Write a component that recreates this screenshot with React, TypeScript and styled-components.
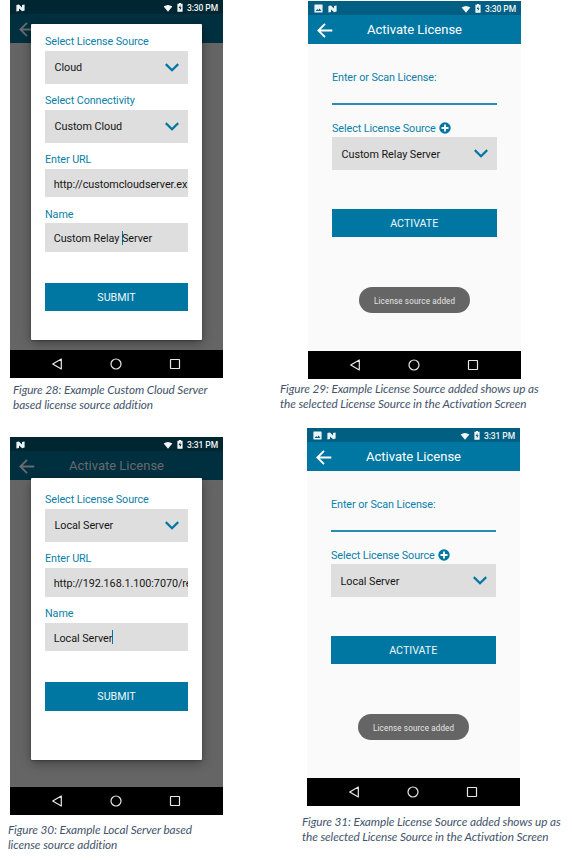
import React from "react";
import styled, { createGlobalStyle } from "styled-components";

const GlobalStyle = createGlobalStyle`
  * { box-sizing: border-box; }
  body { margin: 0; background: #fff; overflow: hidden; }
`;

const Page = styled.main`
  display: grid;
  grid-template-columns: 270px 302px;
  width: 572px;
  height: 860px;
  overflow: hidden;
  font-family: Roboto, sans-serif;
`;

const Column = styled.section<{ $top: number }>`
  display: flex;
  flex-direction: column;
  padding-top: ${(p) => p.$top}px;
`;

const Figure = styled.figure<{ $height: number; $indent: number }>`
  margin: 0;
  height: ${(p) => p.$height}px;
  flex: none;
  padding-left: ${(p) => p.$indent}px;
`;

const Caption = styled.figcaption<{ $shift: number; $gap: number }>`
  margin: ${(p) => p.$gap}px 0 0 ${(p) => p.$shift}px;
  font: italic 11.8px/15px Lato, sans-serif;
  color: #44546a;
`;

const CaptionLine = styled.span<{ $spacing: number }>`
  display: block;
  white-space: nowrap;
  letter-spacing: ${(p) => p.$spacing}px;
`;

const Phone = styled.div`
  position: relative;
  display: flex;
  flex-direction: column;
  width: 213px;
  height: 378px;
  background: #fafafa;
`;

const StatusBar = styled.header<{ $dim?: boolean }>`
  display: flex;
  align-items: center;
  justify-content: space-between;
  height: 14px;
  padding: 1px 5px 0 6px;
  background: ${(p) => (p.$dim ? "#002631" : "#005f82")};
`;

const StatusGroup = styled.div<{ $gap: number }>`
  display: flex;
  align-items: center;
  gap: ${(p) => p.$gap}px;
`;

const Clock = styled.span`
  font-size: 8.5px;
  font-weight: 500;
  line-height: 14px;
  color: #f1f5f6;
  white-space: nowrap;
  letter-spacing: -0.1px;
`;

const AppBar = styled.div<{ $dim?: boolean }>`
  display: grid;
  grid-template-columns: 24px 1fr 24px;
  align-items: center;
  height: 28.5px;
  padding: 1px 0 0 9px;
  background: ${(p) => (p.$dim ? "#003040" : "#0077a3")};
  color: ${(p) => (p.$dim ? "#666b6d" : "#fff")};
`;

const Title = styled.h1`
  margin: 0 0 0 -9px;
  text-align: center;
  font-size: 13px;
  font-weight: 400;
  line-height: 28px;
  letter-spacing: 0;
`;

const Screen = styled.div<{ $dim?: boolean }>`
  flex: 1;
  display: flex;
  flex-direction: column;
  padding: 25px 24.5px 0 24px;
  background: ${(p) => (p.$dim ? "#656565" : "#fafafa")};
`;

const NavBar = styled.nav`
  display: flex;
  align-items: center;
  justify-content: center;
  gap: 47px;
  height: 28.4px;
  padding-right: 1px;
  background: #000;
`;

const Label = styled.label`
  display: flex;
  align-items: center;
  gap: 3px;
  height: 18px;
  font-size: 10.8px;
  color: #0b7fa9;
  white-space: nowrap;
  letter-spacing: -0.09px;
`;

const LicenseInput = styled.div`
  height: 18px;
  margin-bottom: 14.5px;
  border-bottom: 2px solid #2a8cb1;
`;

const SelectBox = styled.div`
  display: flex;
  align-items: center;
  justify-content: space-between;
  height: 33px;
  padding: 1px 9px 0 9.5px;
  background: #dedede;
  color: #161616;
  font-size: 10.8px;
  letter-spacing: -0.04px;
  white-space: nowrap;
`;

const InputBox = styled.div`
  display: flex;
  align-items: center;
  height: 28.7px;
  padding: 2px 0 0 8.7px;
  overflow: hidden;
  background: #dedede;
  color: #161616;
  font-size: 10.8px;
  letter-spacing: -0.05px;
  white-space: pre;
`;

const Caret = styled.i`
  width: 1px;
  height: 14px;
  margin: -2px -1px 0 0;
  background: #0077a3;
`;

const Field = styled.div`
  margin-bottom: 8px;
`;

const Button = styled.button<{ $gap: number }>`
  display: block;
  width: 100%;
  height: 28.3px;
  margin-top: ${(p) => p.$gap}px;
  padding: 1px 0 0;
  border: 0;
  background: #0077a3;
  color: #eef7fa;
  font: 400 10.7px/28px Roboto, sans-serif;
`;

const Dialog = styled.div<{ $top: number; $height: number; $pad: number }>`
  position: absolute;
  left: 21.4px;
  top: ${(p) => p.$top}px;
  width: 170.4px;
  height: ${(p) => p.$height}px;
  padding: ${(p) => p.$pad}px 13.8px 0 13.6px;
  background: #fff;
  border-radius: 1px;
  box-shadow: 0 3px 12px rgba(0, 0, 0, 0.36), 0 1px 2px rgba(0, 0, 0, 0.25);
`;

const Toast = styled.div`
  position: absolute;
  left: 51px;
  top: 286px;
  width: 111px;
  height: 26px;
  border-radius: 13px;
  background: #656565;
  color: #e6e6e6;
  font-size: 9.6px;
  line-height: 27px;
  display: flex;
  justify-content: center;
`;

const ToastText = styled.span`
  white-space: nowrap;
  letter-spacing: 0.2px;
  transform: scaleX(0.835);
`;

const PictureIcon = () => (
  <svg width="9" height="9" viewBox="0 0 9 9">
    <path fill="#edf3f5" fillRule="evenodd" d="M1 .5h7q.6 0 .6.6v6.800q0 .6-.6.6H1q-.6 0-.6-.6V1.100Q.4.5 1 .5ZM1.700 7h5.700L5.600 4.500 4.200 6.200 3.200 5.100Z" />
  </svg>
);

const NougatIcon = () => (
  <svg width="9" height="8" viewBox="0 0 9 8">
    <path fill="#edf3f5" d="M.4 1 2.900.6 6 3.600V1l2.600-.4v6L6.200 7.300 3 4.400V7L.4 7.400Z" />
  </svg>
);

const WifiIcon = () => (
  <svg width="10" height="8" viewBox="0 0 11 9">
    <path fill="#f4f7f8" d="M.6 2.800Q5.400-.8 10.400 2.800L5.500 8.700Z" />
  </svg>
);

const BatteryIcon = () => (
  <svg width="6" height="9" viewBox="0 0 6 9">
    <path fill="#f4f7f8" fillRule="evenodd" d="M2 0h2v.8h1.600v8H.4v-8H2ZM3.500 2 1.600 5h1.200v2.200L4.500 4.200H3.300Z" />
  </svg>
);

const BackArrow = () => (
  <svg width="16" height="15" viewBox="0 0 16 15" fill="none" stroke="currentColor" strokeWidth="1.9">
    <path d="M15.300 7.500H1.600M8 .9 1.400 7.500 8 14.100" />
  </svg>
);

const Chevron = () => (
  <svg width="14" height="10" viewBox="0 0 14 10" fill="none" stroke="#0077a3" strokeWidth="2.200">
    <path d="m.8 1.100 6.200 6.200 6.200-6.200" />
  </svg>
);

const PlusIcon = () => (
  <svg width="12" height="12" viewBox="0 0 12 12">
    <circle cx="6" cy="6" r="5.700" fill="#0077a3" />
    <path d="M6 2.500v7M2.500 6h7" stroke="#fff" strokeWidth="1.800" />
  </svg>
);

const Navigation = () => (
  <NavBar>
    <svg width="12" height="12" viewBox="0 0 12 12" fill="none" stroke="#e8e8e8" strokeWidth="1.200">
      <path d="M10.300 1v10L1.700 6Z" strokeLinejoin="round" />
    </svg>
    <svg width="12" height="12" viewBox="0 0 12 12" fill="none" stroke="#e8e8e8" strokeWidth="1.200">
      <circle cx="6" cy="6" r="5" />
    </svg>
    <svg width="12" height="12" viewBox="0 0 12 12" fill="none" stroke="#e8e8e8" strokeWidth="1.200">
      <rect x="1.500" y="1.500" width="9" height="9" rx=".4" />
    </svg>
  </NavBar>
);

const Chrome = ({ time, dim }: { time: string; dim?: boolean }) => (
  <>
    <StatusBar $dim={dim}>
      <StatusGroup $gap={5}>
        {!dim && <PictureIcon />}
        <NougatIcon />
      </StatusGroup>
      <StatusGroup $gap={4}>
        <WifiIcon />
        <BatteryIcon />
        <Clock>{time}</Clock>
      </StatusGroup>
    </StatusBar>
    <AppBar $dim={dim}>
      <BackArrow />
      <Title>Activate License</Title>
    </AppBar>
  </>
);

const Select = ({ label, value }: { label: string; value: string }) => (
  <Field>
    <Label>{label}</Label>
    <SelectBox>
      {value}
      <Chevron />
    </SelectBox>
  </Field>
);

const Input = ({ label, children }: { label: string; children: React.ReactNode }) => (
  <Field>
    <Label>{label}</Label>
    <InputBox>{children}</InputBox>
  </Field>
);

const ActivationPhone = ({ time, source }: { time: string; source: string }) => (
  <Phone>
    <Chrome time={time} />
    <Screen>
      <Label>Enter or Scan License:</Label>
      <LicenseInput />
      <Label>
        Select License Source <PlusIcon />
      </Label>
      <SelectBox>
        {source}
        <Chevron />
      </SelectBox>
      <Button $gap={38.5}>ACTIVATE</Button>
    </Screen>
    <Navigation />
    <Toast>
      <ToastText>License source added</ToastText>
    </Toast>
  </Phone>
);

type DialogPhoneProps = {
  time: string;
  top: number;
  height: number;
  pad: number;
  children: React.ReactNode;
};

const DialogPhone = ({ time, top, height, pad, children }: DialogPhoneProps) => (
  <Phone>
    <Chrome time={time} dim />
    <Screen $dim />
    <Dialog $top={top} $height={height} $pad={pad}>
      {children}
      <Button $gap={31}>SUBMIT</Button>
    </Dialog>
    <Navigation />
  </Phone>
);

export default function App() {
  return (
    <Page>
      <GlobalStyle />
      <Column $top={0}>
        <Figure $height={437} $indent={10}>
          <DialogPhone time="3:30 PM" top={23.5} height={316.5} pad={9.2}>
            <Select label="Select License Source" value="Cloud" />
            <Select label="Select Connectivity" value="Custom Cloud" />
            <Input label="Enter URL">http://customcloudserver.ex</Input>
            <Input label="Name">
              Custom Relay <Caret />Server
            </Input>
          </DialogPhone>
          <Caption $shift={3} $gap={4}>
            <CaptionLine $spacing={-0.13}>Figure 28: Example Custom Cloud Server</CaptionLine>
            <CaptionLine $spacing={-0.08}>based license source addition</CaptionLine>
          </Caption>
        </Figure>
        <Figure $height={423} $indent={10}>
          <DialogPhone time="3:31 PM" top={40.6} height={282.4} pad={13.4}>
            <Select label="Select License Source" value="Local Server" />
            <Input label="Enter URL">http://192.168.1.100:7070/re</Input>
            <Input label="Name">
              Local Server
              <Caret />
            </Input>
          </DialogPhone>
          <Caption $shift={-2} $gap={7}>
            <CaptionLine $spacing={-0.08}>Figure 30: Example Local Server based</CaptionLine>
            <CaptionLine $spacing={-0.06}>license source addition</CaptionLine>
          </Caption>
        </Figure>
      </Column>
      <Column $top={1}>
        <Figure $height={427} $indent={38}>
          <ActivationPhone time="3:30 PM" source="Custom Relay Server" />
          <Caption $shift={-28} $gap={2}>
            <CaptionLine $spacing={-0.09}>Figure 29: Example License Source added shows up as</CaptionLine>
            <CaptionLine $spacing={-0.1}>the selected License Source in the Activation Screen</CaptionLine>
          </Caption>
        </Figure>
        <Figure $height={432} $indent={37}>
          <ActivationPhone time="3:31 PM" source="Local Server" />
          <Caption $shift={-5} $gap={8}>
            <CaptionLine $spacing={-0.09}>Figure 31: Example License Source added shows up as</CaptionLine>
            <CaptionLine $spacing={-0.1}>the selected License Source in the Activation Screen</CaptionLine>
          </Caption>
        </Figure>
      </Column>
    </Page>
  );
}
